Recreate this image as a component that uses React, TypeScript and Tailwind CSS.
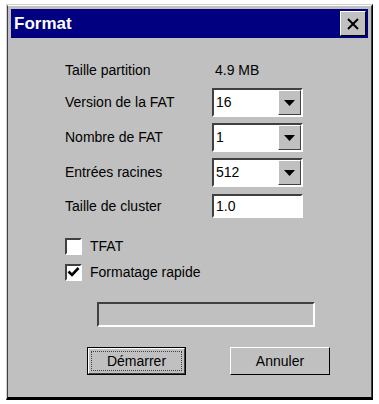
import React from "react";

const font = { fontFamily: '"Liberation Sans", Arial, sans-serif' };

function Combo({ value }: { value: string }) {
  return (
    <div className="flex h-[29px] w-[91px] border-2 border-t-[#404040] border-l-[#404040] border-r-[#ffffff] border-b-[#ffffff] bg-white">
      <div className="flex flex-1 items-center pl-[2px] text-[14px] text-black">{value}</div>
      <div className="flex w-[23px] items-center justify-center border border-t-[#ffffff] border-l-[#ffffff] border-r-[#404040] border-b-[#404040] bg-[#c0c0c0]">
        <svg width="11" height="6" viewBox="0 0 11 6">
          <path d="M0 0 H11 L5.5 6 Z" fill="#000" />
        </svg>
      </div>
    </div>
  );
}

function Check({ checked, label }: { checked?: boolean; label: string }) {
  return (
    <div className="flex h-[16px] items-center gap-[8px]">
      <div className="flex h-[17px] w-[17px] items-center justify-center border-2 border-t-[#404040] border-l-[#404040] border-r-[#ffffff] border-b-[#ffffff] bg-white">
        {checked && (
          <svg width="13" height="12" viewBox="0 0 13 12">
            <path d="M1.5 5.5 L5 9 L11.5 2" stroke="#000" strokeWidth="2.6" fill="none" />
          </svg>
        )}
      </div>
      <span className="text-[14px] text-black">{label}</span>
    </div>
  );
}

export default function App() {
  return (
    <div className="h-[404px] w-[379px] bg-white pl-[6px] pt-[4px]" style={font}>
      <div className="h-[396px] w-[367px] border border-t-[#d0d0d0] border-l-[#d0d0d0] border-r-[#000000] border-b-[#000000] border-b-2">
        <div className="flex h-full flex-col border border-t-[#ffffff] border-l-[#404040] border-r-[#404040] border-b-[#000000] bg-[#c0c0c0] p-[3px]">
          {/* Title bar */}
          <div className="flex h-[29px] items-center justify-between bg-[#000080] pl-[3px] pr-[2px]">
            <span className="text-[17px] font-bold text-white">Format</span>
            <div className="flex h-[25px] w-[26px] items-center justify-center border border-t-[#ffffff] border-l-[#ffffff] border-r-[#000000] border-b-[#000000] bg-[#c0c0c0]">
              <svg width="12" height="12" viewBox="0 0 12 12">
                <path d="M1 1 L11 11 M11 1 L1 11" stroke="#000" strokeWidth="2" />
              </svg>
            </div>
          </div>

          {/* Body */}
          <div className="flex flex-col pl-[54px]">
            <div className="mt-[22px] flex h-[20px] items-center">
              <span className="w-[150px] text-[14px] text-black">Taille partition</span>
              <span className="text-[14px] text-black">4.9 MB</span>
            </div>

            <div className="mt-[8px] flex flex-col gap-[6px]">
              {[
                ["Version de la FAT", "16"],
                ["Nombre de FAT", "1"],
                ["Entrées racines", "512"],
              ].map(([label, value]) => (
                <div key={label} className="flex items-center">
                  <span className="w-[147px] text-[14px] text-black">{label}</span>
                  <Combo value={value} />
                </div>
              ))}
            </div>

            <div className="mt-[7px] flex items-center">
              <span className="w-[147px] text-[14px] text-black">Taille de cluster</span>
              <div className="flex h-[24px] w-[91px] items-center border-2 border-t-[#404040] border-l-[#404040] border-r-[#ffffff] border-b-[#ffffff] bg-white pl-[2px] text-[14px] text-black">
                1.0
              </div>
            </div>

            <div className="mt-[20px]">
              <Check label="TFAT" />
            </div>
            <div className="mt-[10px]">
              <Check checked label="Formatage rapide" />
            </div>
          </div>

          {/* Progress */}
          <div className="ml-[86px] mt-[22px] h-[25px] w-[218px] border-2 border-t-[#404040] border-l-[#404040] border-r-[#ffffff] border-b-[#ffffff] bg-[#c0c0c0]" />

          {/* Buttons */}
          <div className="ml-[76px] mt-[20px] flex gap-[44px]">
            <div className="flex h-[28px] w-[99px] border border-black">
              <div className="flex flex-1 border border-t-[#ffffff] border-l-[#ffffff] border-r-[#404040] border-b-[#404040] p-[2px]">
                <div className="flex flex-1 items-center justify-center border border-dotted border-[#404040] text-[14px] text-black">
                  Démarrer
                </div>
              </div>
            </div>
            <div className="flex h-[28px] w-[100px] items-center justify-center border border-t-[#ffffff] border-l-[#ffffff] border-r-[#000000] border-b-[#000000] text-[14px] text-black">
              Annuler
            </div>
          </div>
        </div>
      </div>
    </div>
  );
}
